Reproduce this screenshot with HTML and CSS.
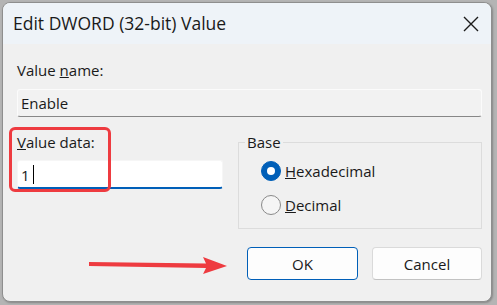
FILE: index.html
```html
<!DOCTYPE html>
<html>
<head>
<meta charset="utf-8">
<link rel="stylesheet" href="styles.css">
</head>
<body>
<div class="window">
  <div class="titlebar">
    <span class="title">Edit DWORD (32-bit) Value</span>
    <span class="close">
      <svg width="16" height="16" viewBox="0 0 16 16"><path d="M1 1 L15 15 M15 1 L1 15" stroke="#1b1b1b" stroke-width="1.4" fill="none"/></svg>
    </span>
  </div>
  <div class="content">
    <div class="label name-label">Value <u>n</u>ame:</div>
    <div class="field name-field">Enable</div>
    <div class="row">
      <div class="col-left">
        <div class="label"><u>V</u>alue data:</div>
        <div class="field data-field">1<span class="caret"></span></div>
      </div>
      <fieldset class="base">
        <legend>Base</legend>
        <div class="radio-row first">
          <span class="radio checked"><span class="dot"></span></span>
          <span class="radio-label"><u>H</u>exadecimal</span>
        </div>
        <div class="radio-row">
          <span class="radio"></span>
          <span class="radio-label"><u>D</u>ecimal</span>
        </div>
      </fieldset>
    </div>
    <div class="buttons">
      <button class="btn ok">OK</button>
      <button class="btn cancel">Cancel</button>
    </div>
  </div>
  <div class="highlight"></div>
  <svg class="arrow" width="150" height="24" viewBox="0 0 150 24">
    <polygon points="0,5 117,6.5 114,0 138,9 114,17 117,11 0,9" fill="#ee3b40"/>
  </svg>
</div>
</body>
</html>
```
FILE: styles.css
```css
html, body {
  margin: 0;
  padding: 0;
}
body {
  width: 497px;
  height: 305px;
  background: #b4b4b4;
  padding: 2px 0 0 2px;
  box-sizing: border-box;
  font-family: "Open Sans", "Noto Sans", sans-serif;
  font-size: 15px;
  color: #1a1a1a;
}
.window {
  position: relative;
  width: 490px;
  height: 300px;
  box-sizing: border-box;
  border: 1px solid #8e8e8e;
  border-radius: 8px;
  overflow: hidden;
  background: #f0f0f0;
  display: flex;
  flex-direction: column;
  box-shadow: 1px 1px 2px rgba(0,0,0,0.25);
}
.titlebar {
  height: 41px;
  flex: none;
  background: #eef3f8;
  display: flex;
  align-items: center;
  justify-content: space-between;
  padding-left: 10px;
}
.title {
  font-size: 17.5px;
  line-height: 20px;
  color: #1a1a1a;
  margin-top: -1px;
}
.close {
  width: 41px;
  height: 41px;
  display: flex;
  align-items: center;
  justify-content: center;
}
.content {
  padding: 0 9px 0 14px;
  display: flex;
  flex-direction: column;
}
.label {
  line-height: 20px;
  height: 20px;
}
.name-label {
  margin-top: 16px;
}
.field {
  box-sizing: border-box;
  border-radius: 3px;
  padding: 0 3px;
  display: flex;
  align-items: center;
}
.name-field {
  margin-top: 9px;
  height: 28px;
  background: #f2f2f2;
  border: 1px solid #fbfbfb;
  border-bottom-color: #878787;
}
.row {
  margin-top: 15px;
  display: flex;
  gap: 15px;
}
.col-left {
  width: 206px;
  display: flex;
  flex-direction: column;
}
.data-field {
  margin-top: 8px;
  height: 29px;
  background: #ffffff;
  border: 1px solid #f6f6f6;
  border-bottom: 2px solid #005fb8;
  padding-top: 1px;
}
.caret {
  display: inline-block;
  width: 1px;
  height: 19px;
  background: #000;
  margin-left: 3px;
}
.base {
  flex: 1;
  margin: 0;
  padding: 0 0 13px 6px;
  border: 1px solid #dcdcdc;
  min-width: 0;
}
.base legend {
  padding: 0 2px;
  line-height: 20px;
}
.radio-row {
  display: flex;
  align-items: center;
  gap: 4px;
  margin-left: 16px;
  height: 20px;
  margin-top: 14px;
}
.radio-row.first {
  margin-top: 9px;
}
.radio {
  width: 20px;
  height: 20px;
  box-sizing: border-box;
  border-radius: 50%;
  border: 1px solid #8a8a8a;
  background: #f5f5f5;
  display: flex;
  align-items: center;
  justify-content: center;
}
.radio.checked {
  background: #005fb8;
  border-color: #005fb8;
}
.radio .dot {
  width: 8px;
  height: 8px;
  border-radius: 50%;
  background: #ffffff;
}
.radio-label {
  line-height: 20px;
  margin-top: -1px;
}
.buttons {
  margin-top: 18px;
  display: flex;
  justify-content: flex-end;
  gap: 14px;
}
.btn {
  font-family: inherit;
  font-size: 15px;
  color: #1a1a1a;
  height: 33px;
  border-radius: 4px;
  background: #fdfdfd;
  padding: 0;
}
.ok {
  width: 111px;
  border: 1px solid #005fb8;
}
.cancel {
  width: 110px;
  border: 1px solid #dadada;
  border-bottom-color: #c2c2c2;
}
.highlight {
  position: absolute;
  left: 6px;
  top: 124px;
  width: 102px;
  height: 65px;
  box-sizing: border-box;
  border: 3px solid #ee3b40;
  border-radius: 6px;
}
.arrow {
  position: absolute;
  left: 86px;
  top: 254px;
}
```
